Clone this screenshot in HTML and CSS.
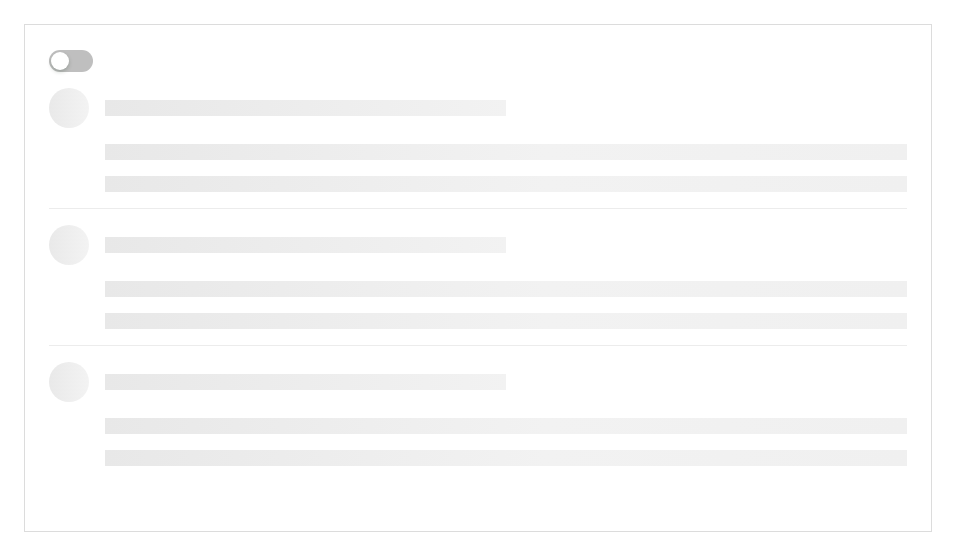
FILE: index.html
```html
<!DOCTYPE html>
<html>
<head>
<meta charset="utf-8">
<link rel="stylesheet" href="styles.css">
</head>
<body>
<div class="card">
  <button class="switch" aria-label="toggle"><span class="handle"></span></button>
  <ul class="list">
    <li class="item">
      <div class="avatar"></div>
      <div class="content">
        <div class="bar title"></div>
        <div class="para">
          <div class="bar"></div>
          <div class="bar"></div>
        </div>
      </div>
    </li>
    <li class="item">
      <div class="avatar"></div>
      <div class="content">
        <div class="bar title"></div>
        <div class="para">
          <div class="bar"></div>
          <div class="bar"></div>
        </div>
      </div>
    </li>
    <li class="item">
      <div class="avatar"></div>
      <div class="content">
        <div class="bar title"></div>
        <div class="para">
          <div class="bar"></div>
          <div class="bar"></div>
        </div>
      </div>
    </li>
  </ul>
</div>
</body>
</html>
```
FILE: styles.css
```css
html, body {
  margin: 0;
  padding: 0;
  background: #fff;
  font-family: "Liberation Sans", Arial, sans-serif;
}
body {
  padding: 24px;
}
.card {
  box-sizing: border-box;
  width: 908px;
  height: 508px;
  border: 1px solid #dcdcdc;
  padding: 24px;
}
.switch {
  display: block;
  position: relative;
  width: 44px;
  height: 22px;
  margin: 1px 0 0 0;
  padding: 0;
  border: none;
  border-radius: 11px;
  background: #bfbfbf;
}
.handle {
  position: absolute;
  left: 2px;
  top: 2px;
  width: 18px;
  height: 18px;
  border-radius: 50%;
  background: #fff;
  box-shadow: 0 2px 4px 0 rgba(0, 35, 11, 0.2);
}
.list {
  list-style: none;
  margin: 0;
  padding: 0;
}
.item {
  display: flex;
  gap: 16px;
  padding: 16px 0;
  border-bottom: 1px solid #ececec;
}
.item:last-child {
  border-bottom: none;
}
.avatar {
  flex: none;
  width: 40px;
  height: 40px;
  border-radius: 50%;
  background: linear-gradient(90deg, #e9e9e9 0%, #f3f3f3 100%);
}
.content {
  flex: 1;
  padding-top: 12px;
}
.bar {
  height: 16px;
  background: linear-gradient(90deg, #e8e8e8 0%, #f2f2f2 55%, #f0f0f0 100%);
}
.title {
  width: 50%;
  background: linear-gradient(90deg, #e8e8e8 0%, #f2f2f2 100%);
}
.para {
  margin-top: 28px;
  display: flex;
  flex-direction: column;
  gap: 16px;
}
```
